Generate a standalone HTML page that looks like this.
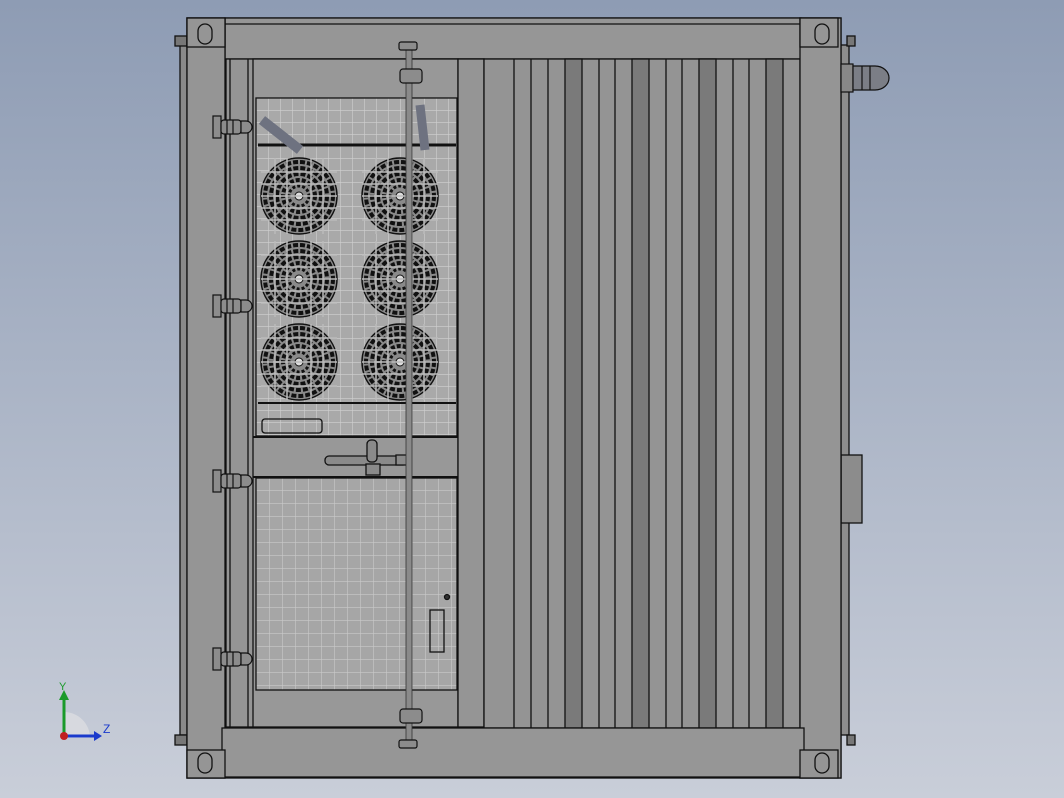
<!DOCTYPE html>
<html><head><style>
html,body{margin:0;padding:0;width:1064px;height:798px;overflow:hidden;background:linear-gradient(#8e9cb4,#c9ced9);}
svg{display:block}
</style></head><body>
<svg width="1064" height="798" viewBox="0 0 1064 798" xmlns="http://www.w3.org/2000/svg">
<defs>
<pattern id="grid" width="12" height="12" patternUnits="userSpaceOnUse" x="256" y="98">
<rect width="12" height="12" fill="#a9a9a9"/>
<path d="M0 0H12M0 0V12" stroke="#d0d0d0" stroke-width="1.2" fill="none"/>
</pattern>
<pattern id="grid2" width="13" height="13" patternUnits="userSpaceOnUse" x="256" y="477">
<rect width="13" height="13" fill="#a6a6a6"/>
<path d="M0 0H13M0 0V13" stroke="#c9c9c9" stroke-width="1.2" fill="none"/>
</pattern>
<g id="fan">
<circle r="38" fill="#8a8a8a" stroke="#111" stroke-width="1.5"/>
<circle r="34" fill="none" stroke="#111" stroke-width="4" stroke-dasharray="5 2"/>
<circle r="28" fill="none" stroke="#111" stroke-width="4" stroke-dasharray="5 2"/>
<circle r="22" fill="none" stroke="#111" stroke-width="4" stroke-dasharray="5 2"/>
<circle r="16" fill="none" stroke="#111" stroke-width="4" stroke-dasharray="4 2"/>
<circle r="10" fill="none" stroke="#111" stroke-width="3" stroke-dasharray="3 2"/>
<circle r="4" fill="#ddd" stroke="#111"/>
<path d="M-38 -12H38M-38 12H38M-38 -24H38M-38 24H38M-12 -38V38M12 -38V38M-24 -38V38M24 -38V38M-38 0H38" stroke="#bbb" stroke-width="1.5"/>
</g>
<g id="hinge" stroke="#111" stroke-width="1.2" fill="#8c8c8c">
<rect x="0" y="0" width="8" height="22"/>
<rect x="8" y="4" width="20" height="14" rx="3"/>
<path d="M28 5h5a6 6 0 0 1 0 12h-5z"/>
<path d="M14 4v14M20 4v14" fill="none"/>
</g>
</defs>
<g stroke="#111" stroke-width="1.3">
<rect x="180" y="45" width="8" height="690" fill="#8a8a8a"/>
<rect x="175" y="36" width="12" height="10" fill="#777"/>
<rect x="175" y="735" width="12" height="10" fill="#777"/>
<rect x="840" y="45" width="9" height="690" fill="#8d8d8d"/>
<rect x="841" y="455" width="21" height="68" fill="#8c8c8c"/>
<rect x="847" y="36" width="8" height="10" fill="#777"/>
<rect x="847" y="735" width="8" height="10" fill="#777"/>
<rect x="187" y="18" width="654" height="760" fill="#959595"/>
<rect x="225" y="18" width="576" height="41" fill="#969696"/>
<rect x="226" y="59" width="258" height="668" fill="#959595"/>
<rect x="253" y="59" width="205" height="668" fill="#989898"/>
<rect x="458" y="59" width="26" height="668" fill="#959595"/>
<rect x="484" y="59" width="316" height="669" fill="#949494"/>
<rect x="565" y="59" width="17" height="669" fill="#7a7a7a"/>
<rect x="632" y="59" width="17" height="669" fill="#7a7a7a"/>
<rect x="699" y="59" width="17" height="669" fill="#7a7a7a"/>
<rect x="766" y="59" width="17" height="669" fill="#7a7a7a"/>
<path d="M514 59V728M531 59V728M548 59V728M599 59V728M615 59V728M666 59V728M682 59V728M733 59V728M749 59V728" fill="none"/>
<rect x="187" y="18" width="38" height="760" fill="#959595"/>
<rect x="800" y="18" width="41" height="760" fill="#959595"/>
<rect x="222" y="728" width="582" height="49" fill="#969696"/>
<rect x="187" y="18" width="38" height="29" fill="#959595"/>
<rect x="800" y="18" width="38" height="29" fill="#959595"/>
<rect x="187" y="750" width="38" height="28" fill="#959595"/>
<rect x="800" y="750" width="38" height="28" fill="#959595"/>
<rect x="198" y="24" width="14" height="20" rx="7" fill="none"/>
<rect x="815" y="24" width="14" height="20" rx="7" fill="none"/>
<rect x="198" y="753" width="14" height="20" rx="7" fill="none"/>
<rect x="815" y="753" width="14" height="20" rx="7" fill="none"/>
<path d="M225 24H800M230 59V727M248 59V727" fill="none"/>
<rect x="256" y="98" width="201" height="338" fill="url(#grid)"/>
<path d="M258 145H456" stroke-width="3"/>
<path d="M262 120L300 150" stroke="#6e7280" stroke-width="10"/>
<path d="M420 105L425 150" stroke="#6e7280" stroke-width="9"/>
<path d="M258 403H456" stroke-width="2"/>
<rect x="262" y="419" width="60" height="14" rx="3" fill="none"/>
<path d="M253 437H458M253 477H458" stroke-width="2"/>
<rect x="256" y="478" width="201" height="212" fill="url(#grid2)"/>
<rect x="430" y="610" width="14" height="42" fill="none"/>
<circle cx="447" cy="597" r="2.5" fill="#333"/>
<rect x="325" y="456" width="82" height="9" rx="4" fill="#8a8a8a"/>
<rect x="367" y="440" width="10" height="22" rx="4" fill="#8a8a8a"/>
<rect x="366" y="464" width="14" height="11" fill="#8a8a8a"/>
<path d="M396 455h14v10h-14z" fill="#8a8a8a"/>
</g>
<use href="#fan" x="299" y="196"/>
<use href="#fan" x="400" y="196"/>
<use href="#fan" x="299" y="279"/>
<use href="#fan" x="400" y="279"/>
<use href="#fan" x="299" y="362"/>
<use href="#fan" x="400" y="362"/>
<rect x="406" y="46" width="6" height="700" fill="#8a8a8a" stroke="#333" stroke-width="0.8"/>
<g stroke="#111" stroke-width="1.2" fill="#8c8c8c">
<rect x="399" y="42" width="18" height="8" rx="2"/>
<rect x="399" y="740" width="18" height="8" rx="2"/>
<rect x="400" y="69" width="22" height="14" rx="3"/>
<rect x="400" y="709" width="22" height="14" rx="3"/>
</g>
<use href="#hinge" x="213" y="116"/>
<use href="#hinge" x="213" y="295"/>
<use href="#hinge" x="213" y="470"/>
<use href="#hinge" x="213" y="648"/>
<g stroke="#111" stroke-width="1.2">
<rect x="841" y="64" width="12" height="28" fill="#888"/>
<path d="M853 66h22a14 12 0 0 1 0 24h-22z" fill="#7b7e86"/>
<path d="M862 66v24M870 66v24" fill="none"/>
</g>
<path d="M64 712a26 26 0 0 1 26 26H64z" fill="#d7d9df"/>
<path d="M64 738V698" stroke="#1a9a2a" stroke-width="3"/>
<path d="M59 700l5-10 5 10z" fill="#1a9a2a"/>
<path d="M64 736H96" stroke="#1a3acc" stroke-width="3"/>
<path d="M94 731l8 5-8 5z" fill="#1a3acc"/>
<circle cx="64" cy="736" r="4" fill="#c02020"/>
<text x="59" y="690" font-family="Liberation Sans,sans-serif" font-size="11" fill="#1a9a2a">Y</text>
<text x="103" y="733" font-family="Liberation Sans,sans-serif" font-size="12" fill="#1a3acc">Z</text>
</svg>
</body></html>
